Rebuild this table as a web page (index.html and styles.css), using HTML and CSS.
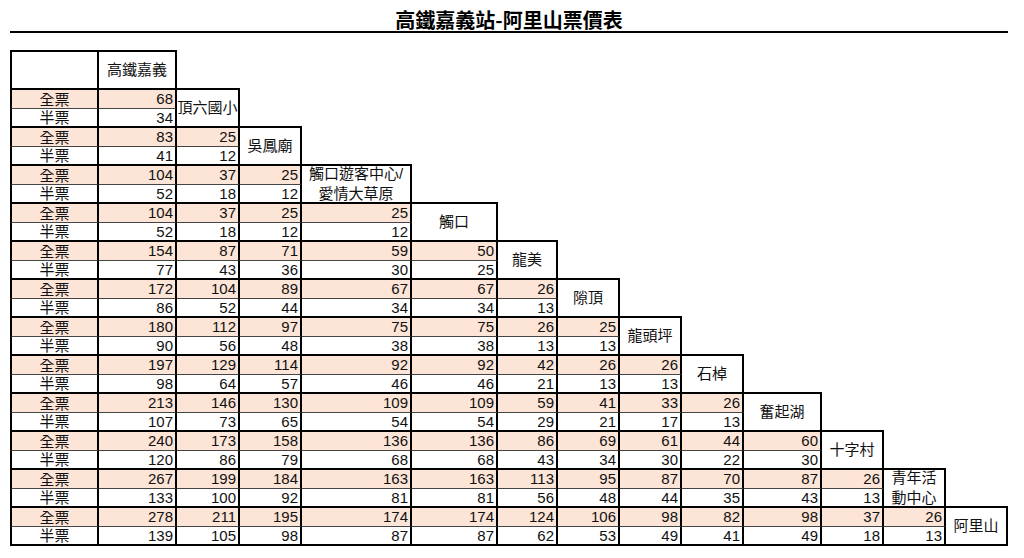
FILE: index.html
```html
<!DOCTYPE html>
<html lang="zh-Hant">
<head>
<meta charset="utf-8">
<title>高鐵嘉義站-阿里山票價表</title>
<link rel="stylesheet" href="styles.css">
</head>
<body>
<h1 class="title">高鐵嘉義站-阿里山票價表</h1>
<div class="fare">
  <div class="corner"></div>
  <div class="head">高鐵嘉義</div>

  <div class="lbl full">全票</div><div class="num full">68</div><div class="stn nowrap">頂六國小</div>
  <div class="lbl half">半票</div><div class="num half">34</div>

  <div class="lbl full">全票</div><div class="num full">83</div><div class="num full">25</div><div class="stn">吳鳳廟</div>
  <div class="lbl half">半票</div><div class="num half">41</div><div class="num half">12</div>

  <div class="lbl full">全票</div><div class="num full">104</div><div class="num full">37</div><div class="num full">25</div><div class="stn">觸口遊客中心/<br>愛情大草原</div>
  <div class="lbl half">半票</div><div class="num half">52</div><div class="num half">18</div><div class="num half">12</div>

  <div class="lbl full">全票</div><div class="num full">104</div><div class="num full">37</div><div class="num full">25</div><div class="num full">25</div><div class="stn">觸口</div>
  <div class="lbl half">半票</div><div class="num half">52</div><div class="num half">18</div><div class="num half">12</div><div class="num half">12</div>

  <div class="lbl full">全票</div><div class="num full">154</div><div class="num full">87</div><div class="num full">71</div><div class="num full">59</div><div class="num full">50</div><div class="stn">龍美</div>
  <div class="lbl half">半票</div><div class="num half">77</div><div class="num half">43</div><div class="num half">36</div><div class="num half">30</div><div class="num half">25</div>

  <div class="lbl full">全票</div><div class="num full">172</div><div class="num full">104</div><div class="num full">89</div><div class="num full">67</div><div class="num full">67</div><div class="num full">26</div><div class="stn">隙頂</div>
  <div class="lbl half">半票</div><div class="num half">86</div><div class="num half">52</div><div class="num half">44</div><div class="num half">34</div><div class="num half">34</div><div class="num half">13</div>

  <div class="lbl full">全票</div><div class="num full">180</div><div class="num full">112</div><div class="num full">97</div><div class="num full">75</div><div class="num full">75</div><div class="num full">26</div><div class="num full">25</div><div class="stn">龍頭坪</div>
  <div class="lbl half">半票</div><div class="num half">90</div><div class="num half">56</div><div class="num half">48</div><div class="num half">38</div><div class="num half">38</div><div class="num half">13</div><div class="num half">13</div>

  <div class="lbl full">全票</div><div class="num full">197</div><div class="num full">129</div><div class="num full">114</div><div class="num full">92</div><div class="num full">92</div><div class="num full">42</div><div class="num full">26</div><div class="num full">26</div><div class="stn">石棹</div>
  <div class="lbl half">半票</div><div class="num half">98</div><div class="num half">64</div><div class="num half">57</div><div class="num half">46</div><div class="num half">46</div><div class="num half">21</div><div class="num half">13</div><div class="num half">13</div>

  <div class="lbl full">全票</div><div class="num full">213</div><div class="num full">146</div><div class="num full">130</div><div class="num full">109</div><div class="num full">109</div><div class="num full">59</div><div class="num full">41</div><div class="num full">33</div><div class="num full">26</div><div class="stn">奮起湖</div>
  <div class="lbl half">半票</div><div class="num half">107</div><div class="num half">73</div><div class="num half">65</div><div class="num half">54</div><div class="num half">54</div><div class="num half">29</div><div class="num half">21</div><div class="num half">17</div><div class="num half">13</div>

  <div class="lbl full">全票</div><div class="num full">240</div><div class="num full">173</div><div class="num full">158</div><div class="num full">136</div><div class="num full">136</div><div class="num full">86</div><div class="num full">69</div><div class="num full">61</div><div class="num full">44</div><div class="num full">60</div><div class="stn">十字村</div>
  <div class="lbl half">半票</div><div class="num half">120</div><div class="num half">86</div><div class="num half">79</div><div class="num half">68</div><div class="num half">68</div><div class="num half">43</div><div class="num half">34</div><div class="num half">30</div><div class="num half">22</div><div class="num half">30</div>

  <div class="lbl full">全票</div><div class="num full">267</div><div class="num full">199</div><div class="num full">184</div><div class="num full">163</div><div class="num full">163</div><div class="num full">113</div><div class="num full">95</div><div class="num full">87</div><div class="num full">70</div><div class="num full">87</div><div class="num full">26</div><div class="stn">青年活<br>動中心</div>
  <div class="lbl half">半票</div><div class="num half">133</div><div class="num half">100</div><div class="num half">92</div><div class="num half">81</div><div class="num half">81</div><div class="num half">56</div><div class="num half">48</div><div class="num half">44</div><div class="num half">35</div><div class="num half">43</div><div class="num half">13</div>

  <div class="lbl full">全票</div><div class="num full">278</div><div class="num full">211</div><div class="num full">195</div><div class="num full">174</div><div class="num full">174</div><div class="num full">124</div><div class="num full">106</div><div class="num full">98</div><div class="num full">82</div><div class="num full">98</div><div class="num full">37</div><div class="num full">26</div><div class="stn">阿里山</div>
  <div class="lbl half">半票</div><div class="num half">139</div><div class="num half">105</div><div class="num half">98</div><div class="num half">87</div><div class="num half">87</div><div class="num half">62</div><div class="num half">53</div><div class="num half">49</div><div class="num half">41</div><div class="num half">49</div><div class="num half">18</div><div class="num half">13</div>
</div>
</body>
</html>
```

FILE: styles.css
```css
html, body {
  margin: 0;
  padding: 0;
  background: #ffffff;
}

body {
  font-family: "Noto Sans CJK TC", "Noto Sans", sans-serif;
  color: #111;
}

.title {
  box-sizing: border-box;
  width: 998px;
  margin: 0 0 17px 10px;
  padding-top: 9px;
  height: 33px;
  font-size: 20px;
  line-height: 22px;
  font-weight: 700;
  text-align: center;
  border-bottom: 2px solid #000;
  color: #000;
}

.fare {
  display: grid;
  grid-template-columns: 89px 78px 63px 62px 110px 86px 60px 62px 62px 62px 78px 62px 62px 62px;
  grid-template-rows: 40px repeat(24, 19px);
  margin-left: 10px;
  font-family: "Liberation Sans", "Noto Sans CJK TC", sans-serif;
  font-size: 15px;
  line-height: 18px;
}

.fare > div {
  box-sizing: border-box;
  display: flex;
  align-items: center;
  border-right: 2px solid #000;
  min-width: 0;
}

.corner {
  grid-column: 1;
  border-left: 2px solid #000;
  border-top: 2px solid #000;
  border-bottom: 2px solid #000;
}

.head {
  justify-content: center;
  border-top: 2px solid #000;
  border-bottom: 2px solid #000;
}

.lbl {
  grid-column: 1;
  justify-content: center;
  border-left: 2px solid #000;
  padding-top: 1px;
}

.num {
  justify-content: flex-end;
  padding-right: 2px;
}

.full {
  background: #fce4d6;
  border-bottom: 1px solid #444;
}

.half {
  background: #ffffff;
  border-bottom: 2px solid #000;
}

.stn {
  grid-row: span 2;
  margin-top: -2px;
  border-top: 2px solid #000;
  border-bottom: 2px solid #000;
  justify-content: center;
  text-align: center;
  line-height: 20px;
  background: #ffffff;
}

.nowrap {
  white-space: nowrap;
  overflow: visible;
}
```
